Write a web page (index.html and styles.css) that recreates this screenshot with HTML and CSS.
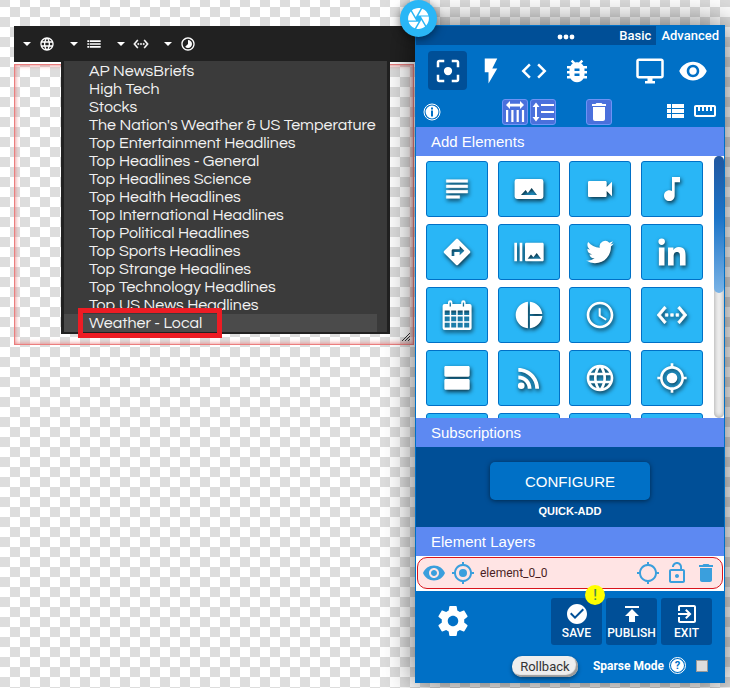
FILE: index.html
```html
<!DOCTYPE html>
<html lang="en">
<head>
<meta charset="utf-8">
<title>Element editor</title>
<link rel="stylesheet" href="styles.css">
</head>
<body>
<svg class="sprite" aria-hidden="true">
  <symbol id="globe" viewBox="0 0 24 24"><path d="M11.99 2C6.47 2 2 6.48 2 12s4.47 10 9.99 10C17.52 22 22 17.52 22 12S17.52 2 11.99 2zm6.93 6h-2.95c-.32-1.25-.78-2.45-1.38-3.56 1.84.63 3.37 1.91 4.33 3.56zM12 4.04c.83 1.2 1.48 2.53 1.91 3.96h-3.82c.43-1.43 1.08-2.76 1.91-3.96zM4.26 14C4.1 13.36 4 12.69 4 12s.1-1.36.26-2h3.38c-.08.66-.14 1.32-.14 2 0 .68.06 1.34.14 2H4.26zm.82 2h2.95c.32 1.25.78 2.45 1.38 3.56-1.84-.63-3.37-1.9-4.33-3.56zm2.95-8H5.08c.96-1.66 2.49-2.93 4.33-3.56C8.81 5.55 8.35 6.75 8.03 8zM12 19.96c-.83-1.2-1.48-2.53-1.91-3.96h3.82c-.43 1.43-1.08 2.76-1.91 3.96zM14.34 14H9.66c-.09-.66-.16-1.32-.16-2 0-.68.07-1.35.16-2h4.68c.09.65.16 1.32.16 2 0 .68-.07 1.34-.16 2zm.25 5.56c.6-1.11 1.06-2.31 1.38-3.56h2.95c-.96 1.65-2.49 2.93-4.33 3.56zM16.36 14c.08-.66.14-1.32.14-2 0-.68-.06-1.34-.14-2h3.38c.16.64.26 1.31.26 2s-.1 1.36-.26 2h-3.38z"/></symbol>
  <symbol id="list" viewBox="0 0 24 24"><path d="M2 13h3v-2H2v2zm0 4.500h3v-2.500H2v2.500zm0-8.500h3V6.500H2v2.500zm4 4h16v-2H6v2zm0 4.500h16v-2.500H6v2.500zM6 6.500v2.500h16V6.500H6z"/></symbol>
  <symbol id="ethernet" viewBox="0 0 24 24"><path stroke="currentColor" stroke-width=".5" d="M7.770 6.760L6.230 5.480.82 12l5.410 6.520 1.540-1.280L3.420 12l4.350-5.240zM7 13h2v-2H7v2zm10-2h-2v2h2v-2zm-6 2h2v-2h-2v2zm6.770-7.520l-1.540 1.280L20.580 12l-4.350 5.240 1.540 1.280L23.180 12l-5.410-6.520z"/></symbol>
  <symbol id="timelapse" viewBox="0 0 24 24"><path d="M16.240 7.760C15.070 6.590 13.540 6 12 6v6l-4.240 4.240c2.340 2.340 6.140 2.340 8.490 0 2.340-2.340 2.340-6.140-.01-8.480zM12 2C6.480 2 2 6.480 2 12s4.480 10 10 10 10-4.480 10-10S17.520 2 12 2zm0 18c-4.420 0-8-3.580-8-8s3.580-8 8-8 8 3.580 8 8-3.580 8-8 8z"/></symbol>
  <symbol id="camera" viewBox="0 0 24 24"><path d="M9.400 10.500l4.770-8.260C13.470 2.090 12.750 2 12 2c-2.400 0-4.600.85-6.320 2.250l3.660 6.350.06-.1zM21.540 9c-.92-2.920-3.150-5.260-6-6.340L11.880 9h9.660zm.26 1h-7.490l.29.5 4.760 8.250C21 16.970 22 14.610 22 12c0-.69-.07-1.350-.2-2zM8.540 12l-3.900-6.750C3.010 7.030 2 9.390 2 12c0 .69.07 1.350.2 2h7.490l-1.150-2zm-6.080 3c.92 2.920 3.150 5.260 6 6.340L12.120 15H2.460zm11.270 0l-3.900 6.760c.7.150 1.420.24 2.170.24 2.400 0 4.600-.85 6.320-2.250l-3.660-6.350-.93 1.600z"/></symbol>
  <symbol id="dots" viewBox="0 0 18 6"><circle cx="3" cy="3" r="2.400"/><circle cx="9" cy="3" r="2.400"/><circle cx="15" cy="3" r="2.400"/></symbol>
  <symbol id="focus" viewBox="0 0 24 24"><circle cx="12" cy="12" r="3.300"/><path d="M5 15H3v4c0 1.100.9 2 2 2h4v-2H5v-4zM5 5h4V3H5c-1.100 0-2 .9-2 2v4h2V5zm14-2h-4v2h4v4h2V5c0-1.100-.9-2-2-2zm0 16h-4v2h4c1.100 0 2-.9 2-2v-4h-2v4z"/></symbol>
  <symbol id="flash" viewBox="0 0 24 24"><path d="M7 2v11h3v9l7-12h-4l4-8z"/></symbol>
  <symbol id="code" viewBox="0 0 24 24"><path d="M9.400 16.600L4.800 12l4.600-4.600L8 6l-6 6 6 6 1.400-1.400zm5.200 0l4.600-4.600-4.600-4.600L16 6l6 6-6 6-1.400-1.400z"/></symbol>
  <symbol id="bug" viewBox="0 0 24 24"><path d="M20 8h-2.810c-.45-.78-1.070-1.450-1.820-1.960L17 4.410 15.590 3l-2.170 2.170C12.960 5.060 12.490 5 12 5c-.49 0-.96.06-1.410.17L8.410 3 7 4.410l1.620 1.630C7.880 6.550 7.260 7.220 6.810 8H4v2h2.090c-.05.33-.09.66-.09 1v1H4v2h2v1c0 .34.04.67.09 1H4v2h2.810c1.040 1.790 2.970 3 5.190 3s4.150-1.210 5.190-3H20v-2h-2.090c.05-.33.09-.66.09-1v-1h2v-2h-2v-1c0-.34-.04-.67-.09-1H20V8zm-6 8h-4v-2h4v2zm0-4h-4v-2h4v2z"/></symbol>
  <symbol id="monitor" viewBox="0 0 24 24"><path d="M21 2H3c-1.100 0-2 .9-2 2v12c0 1.100.9 2 2 2h7v2H8v2h8v-2h-2v-2h7c1.100 0 2-.9 2-2V4c0-1.100-.9-2-2-2zm0 14H3V4h18v12z"/></symbol>
  <symbol id="eye" viewBox="0 0 24 24"><path d="M12 4.500C7 4.500 2.730 7.610 1 12c1.730 4.390 6 7.500 11 7.500s9.270-3.110 11-7.500c-1.730-4.390-6-7.500-11-7.500zM12 17c-2.760 0-5-2.240-5-5s2.240-5 5-5 5 2.240 5 5-2.240 5-5 5zm0-8c-1.660 0-3 1.340-3 3s1.340 3 3 3 3-1.340 3-3-1.340-3-3-3z"/></symbol>
  <symbol id="info" viewBox="0 0 18 18"><circle cx="9" cy="9" r="8" fill="none" stroke="currentColor"/><circle cx="9" cy="9" r="6.400"/><path d="M8 4.500h2v2H8zM8 7.500h2v6H8z" fill="#0070c6"/></symbol>
  <symbol id="columns" viewBox="0 0 24 24"><path d="M7 6.500V9L3 5l4-4v2.800h10V1l4 4-4 4V6.500zM3 10h2.200v12H3zm5.300 0h2.200v12H8.300zm5.300 0h2.200v12h-2.200zm5.300 0h2.200v12h-2.200z"/></symbol>
  <symbol id="spacing" viewBox="0 0 24 24"><path d="M6 7h2.500L5 2.500 1.500 7H4v10H1.500L5 21.500 8.500 17H6V7zm4-3v2h13V4H10zm0 16h13v-2H10v2zm0-7h13v-2H10v2z"/></symbol>
  <symbol id="trash" viewBox="0 0 24 24"><path d="M6 19c0 1.100.9 2 2 2h8c1.100 0 2-.9 2-2V7H6v12zM19 4h-3.500l-1-1h-5l-1 1H5v2h14V4z"/></symbol>
  <symbol id="rows" viewBox="0 0 24 24"><path d="M4 14h4v-4H4v4zm0 5h4v-4H4v4zM4 9h4V5H4v4zm5 5h12v-4H9v4zm0 5h12v-4H9v4zM9 5v4h12V5H9z"/></symbol>
  <symbol id="ruler" viewBox="0 0 24 24"><path d="M21 6H3c-1.100 0-2 .9-2 2v8c0 1.100.9 2 2 2h18c1.100 0 2-.9 2-2V8c0-1.100-.9-2-2-2zm0 10H3V8h2v4h2V8h2v4h2V8h2v4h2V8h2v4h2V8h2v8z"/></symbol>
  <symbol id="subject" viewBox="0 0 24 24"><path d="M14 17H4v2h10v-2zm6-8H4v2h16V9zM4 15h16v-2H4v2zM4 5v2h16V5H4z" stroke="currentColor" stroke-width=".4"/></symbol>
  <symbol id="image" viewBox="0 0 24 24"><path fill-rule="evenodd" d="M3 4.500h18a1.800 1.800 0 0 1 1.800 1.800v11.400a1.800 1.800 0 0 1-1.800 1.800H3a1.800 1.800 0 0 1-1.800-1.800V6.300A1.800 1.800 0 0 1 3 4.500zM6 16.500h12l-4-5.300-2.900 3.800-1.600-2.300z"/></symbol>
  <symbol id="video" viewBox="0 0 24 24"><path d="M17 10.500V7c0-.55-.45-1-1-1H4c-.55 0-1 .45-1 1v10c0 .55.45 1 1 1h12c.55 0 1-.45 1-1v-3.500l4 4v-11l-4 4z"/></symbol>
  <symbol id="note" viewBox="0 0 24 24"><path d="M12 3v10.550c-.59-.34-1.270-.55-2-.55-2.210 0-4 1.790-4 4s1.790 4 4 4 4-1.790 4-4V7h4V3h-6z"/></symbol>
  <symbol id="directions" viewBox="0 0 24 24"><path d="M21.710 11.290l-9-9c-.39-.39-1.020-.39-1.410 0l-9 9c-.39.39-.39 1.020 0 1.410l9 9c.39.39 1.020.39 1.410 0l9-9c.39-.38.39-1.010 0-1.410zM14 14.500V12h-4v3H8v-4c0-.55.45-1 1-1h5V7.500l3.500 3.500-3.500 3.500z"/></symbol>
  <symbol id="burst" viewBox="0 0 24 24"><path d="M1 5h2v14H1zm4 0h2v14H5zm17 0H10c-.55 0-1 .45-1 1v12c0 .55.45 1 1 1h12c.55 0 1-.45 1-1V6c0-.55-.45-1-1-1zM11 17l2.500-3.150L15.290 16l2.500-3.220L21 17H11z"/></symbol>
  <symbol id="twitter" viewBox="-2 -2 28 28"><path d="M23.953 4.570a10 10 0 01-2.825.775 4.958 4.958 0 002.163-2.723c-.951.555-2.005.959-3.127 1.184a4.920 4.920 0 00-8.384 4.482C7.690 8.095 4.067 6.130 1.640 3.162a4.822 4.822 0 00-.666 2.475c0 1.710.87 3.213 2.188 4.096a4.904 4.904 0 01-2.228-.616v.06a4.923 4.923 0 003.946 4.827 4.996 4.996 0 01-2.212.085 4.936 4.936 0 004.604 3.417 9.867 9.867 0 01-6.102 2.105c-.39 0-.779-.023-1.170-.067a13.995 13.995 0 007.557 2.209c9.053 0 13.998-7.496 13.998-13.985 0-.21 0-.42-.015-.63A9.935 9.935 0 0024 4.590z"/></symbol>
  <symbol id="linkedin" viewBox="-40 -40 528 528"><path d="M100.280 448H7.400V148.900h92.880zM53.790 108.100C24.090 108.100 0 83.500 0 53.800a53.790 53.790 0 0 1 107.580 0c0 29.700-24.100 54.300-53.790 54.300zM447.900 448h-92.680V302.400c0-34.700-.7-79.200-48.290-79.200-48.290 0-55.690 37.700-55.690 76.700V448h-92.780V148.900h89.080v40.800h1.300c12.400-23.500 42.690-48.300 87.880-48.300 94 0 111.280 61.900 111.280 142.300V448z"/></symbol>
  <symbol id="calendar" viewBox="0 0 32 32"><path fill-rule="evenodd" d="M3.500 5H7V3.500a2.200 2.200 0 0 1 4.400 0V5h8.800V3.500a2.200 2.200 0 0 1 4.400 0V5h4a2 2 0 0 1 2 2v22a2 2 0 0 1-2 2h-25a2 2 0 0 1-2-2V7a2 2 0 0 1 2-2zM8.600 3.500v4h1.300v-4zm13.200 0v4h1.300v-4zM3.700 11.500v4.400h5v-4.400zm6.500 0v4.400h5v-4.400zm6.500 0v4.400h5v-4.400zm6.500 0v4.400h5v-4.400zM3.700 17.400v4.800h5v-4.800zm6.500 0v4.800h5v-4.800zm6.500 0v4.800h5v-4.800zm6.500 0v4.800h5v-4.800zM3.700 23.700v4.800h5v-4.800zm6.500 0v4.800h5v-4.800zm6.500 0v4.800h5v-4.800zm6.500 0v4.800h5v-4.800z"/></symbol>
  <symbol id="pie" viewBox="0 0 24 24"><path d="M11.200 2v20C6 21.500 2 17.200 2 12s4-9.500 9.200-10zm1.500 0v9.200H22c-.47-4.900-4.400-8.700-9.300-9.200zm0 10.800V22c4.900-.5 8.800-4.300 9.300-9.200z"/></symbol>
  <symbol id="clock" viewBox="0 0 24 24"><path d="M11.990 2C6.470 2 2 6.480 2 12s4.470 10 9.990 10C17.520 22 22 17.520 22 12S17.520 2 11.990 2zM12 20c-4.420 0-8-3.580-8-8s3.580-8 8-8 8 3.580 8 8-3.580 8-8 8zm.5-13H11v6l5.250 3.150.75-1.230-4.500-2.670z"/></symbol>
  <symbol id="agenda" viewBox="0 0 24 24"><path d="M20.500 12.800h-17c-.55 0-1 .45-1 1v6c0 .55.45 1 1 1h17c.55 0 1-.45 1-1v-6c0-.55-.45-1-1-1zm0-9.800h-17c-.55 0-1 .45-1 1v6c0 .55.45 1 1 1h17c.55 0 1-.45 1-1V4c0-.55-.45-1-1-1z"/></symbol>
  <symbol id="rss" viewBox="0 0 24 24"><circle cx="6.180" cy="17.820" r="2.500"/><path d="M4 4.440v2.830c7.030 0 12.730 5.700 12.730 12.730h2.830c0-8.590-6.970-15.560-15.560-15.560zm0 5.660v2.830c3.900 0 7.070 3.170 7.070 7.070h2.830c0-5.470-4.430-9.900-9.900-9.900z"/></symbol>
  <symbol id="ring" viewBox="0 0 24 24"><path d="M20.940 11c-.46-4.170-3.770-7.480-7.940-7.940V1h-2v2.060C6.830 3.520 3.520 6.830 3.060 11H1v2h2.060c.46 4.170 3.770 7.480 7.940 7.940V23h2v-2.060c4.170-.46 7.480-3.770 7.940-7.940H23v-2h-2.060zM12 19c-3.870 0-7-3.130-7-7s3.130-7 7-7 7 3.130 7 7-3.130 7-7 7z"/></symbol>
  <symbol id="target" viewBox="0 0 24 24"><circle cx="12" cy="12" r="4"/><path d="M20.940 11c-.46-4.170-3.770-7.480-7.940-7.940V1h-2v2.060C6.830 3.520 3.520 6.830 3.060 11H1v2h2.060c.46 4.170 3.770 7.480 7.940 7.940V23h2v-2.060c4.170-.46 7.480-3.770 7.940-7.940H23v-2h-2.060zM12 19c-3.870 0-7-3.130-7-7s3.130-7 7-7 7 3.130 7 7-3.130 7-7 7z"/></symbol>
  <symbol id="unlock" viewBox="0 0 24 24"><path d="M12 17c1.100 0 2-.9 2-2s-.9-2-2-2-2 .9-2 2 .9 2 2 2zm6-9h-1V6c0-2.760-2.240-5-5-5S7 3.240 7 6h1.900c0-1.710 1.390-3.100 3.100-3.100 1.710 0 3.100 1.390 3.100 3.100v2H6c-1.100 0-2 .9-2 2v10c0 1.100.9 2 2 2h12c1.100 0 2-.9 2-2V10c0-1.100-.9-2-2-2zm0 12H6V10h12v10z"/></symbol>
  <symbol id="gear" viewBox="0 0 24 24"><path d="M19.430 12.980c.04-.32.07-.64.07-.98s-.03-.66-.07-.98l2.110-1.650c.19-.15.24-.42.12-.64l-2-3.460c-.12-.22-.39-.3-.61-.22l-2.490 1c-.52-.4-1.080-.73-1.690-.98l-.38-2.650C14.460 2.180 14.250 2 14 2h-4c-.25 0-.46.18-.49.42l-.38 2.650c-.61.25-1.170.59-1.690.98l-2.490-1c-.23-.09-.49 0-.61.22l-2 3.460c-.13.22-.07.49.12.64l2.110 1.650c-.04.32-.07.65-.07.98s.03.66.07.98l-2.110 1.650c-.19.15-.24.42-.12.64l2 3.460c.12.22.39.3.61.22l2.490-1c.52.4 1.080.73 1.690.98l.38 2.650c.03.24.24.42.49.42h4c.25 0 .46-.18.49-.42l.38-2.650c.61-.25 1.170-.59 1.690-.98l2.490 1c.23.09.49 0 .61-.22l2-3.460c.12-.22.07-.49-.12-.64l-2.110-1.650zM12 15.500c-1.930 0-3.500-1.570-3.500-3.500s1.570-3.500 3.500-3.500 3.500 1.570 3.500 3.500-1.570 3.500-3.500 3.500z"/></symbol>
  <symbol id="check" viewBox="0 0 24 24"><path d="M12 2C6.480 2 2 6.480 2 12s4.480 10 10 10 10-4.480 10-10S17.520 2 12 2zm-2 15l-5-5 1.410-1.410L10 14.170l7.590-7.590L19 8l-9 9z"/></symbol>
  <symbol id="publish" viewBox="0 0 24 24"><path d="M5 4v2h14V4H5zm0 10h4v6h6v-6h4l-7-7-7 7z"/></symbol>
  <symbol id="exit" viewBox="0 0 24 24"><path d="M10.090 15.590L11.500 17l5-5-5-5-1.410 1.410L12.670 11H3v2h9.670l-2.580 2.590zM19 3H5c-1.110 0-2 .9-2 2v4h2V5h14v14H5v-4H3v4c0 1.100.89 2 2 2h14c1.100 0 2-.9 2-2V5c0-1.100-.9-2-2-2z"/></symbol>
</svg>

<main class="canvas">
  <div class="toolbar">
    <button class="tool" aria-label="Links"><span class="caret"></span><svg><use href="#globe"/></svg></button>
    <button class="tool" aria-label="Feeds"><span class="caret"></span><svg><use href="#list"/></svg></button>
    <button class="tool" aria-label="Embed"><span class="caret"></span><svg><use href="#ethernet"/></svg></button>
    <button class="tool" aria-label="Timing"><span class="caret"></span><svg><use href="#timelapse"/></svg></button>
    <ul class="menu">
      <li>AP NewsBriefs</li>
      <li>High Tech</li>
      <li>Stocks</li>
      <li>The Nation's Weather &amp; US Temperature</li>
      <li>Top Entertainment Headlines</li>
      <li>Top Headlines - General</li>
      <li>Top Headlines Science</li>
      <li>Top Health Headlines</li>
      <li>Top International Headlines</li>
      <li>Top Political Headlines</li>
      <li>Top Sports Headlines</li>
      <li>Top Strange Headlines</li>
      <li>Top Technology Headlines</li>
      <li>Top US News Headlines</li>
      <li class="current">Weather - Local<span class="marker"></span></li>
    </ul>
  </div>
  <div class="frame">
    <svg class="grip" viewBox="0 0 8 8"><path d="M0 8L8 0M3 8l5-5M6 8l2-2"/></svg>
  </div>
</main>

<aside class="panel">
  <button class="shutter" aria-label="Capture"><svg><use href="#camera"/></svg></button>
  <header class="tabs">
    <svg class="handle"><use href="#dots"/></svg>
    <button class="tab">Basic</button>
    <button class="tab active">Advanced</button>
  </header>
  <div class="modes">
    <button class="mode active" aria-label="Focus"><svg><use href="#focus"/></svg></button>
    <button class="mode" aria-label="Actions"><svg><use href="#flash"/></svg></button>
    <button class="mode" aria-label="Code"><svg><use href="#code"/></svg></button>
    <button class="mode" aria-label="Debug"><svg><use href="#bug"/></svg></button>
    <button class="mode push" aria-label="Display"><svg><use href="#monitor"/></svg></button>
    <button class="mode" aria-label="Preview"><svg><use href="#eye"/></svg></button>
  </div>
  <div class="options">
    <button class="plain" aria-label="Info"><svg class="badge-icon"><use href="#info"/></svg></button>
    <div class="chips">
      <button class="chip" aria-label="Column spacing"><svg><use href="#columns"/></svg></button>
      <button class="chip" aria-label="Row spacing"><svg><use href="#spacing"/></svg></button>
      <button class="chip apart" aria-label="Delete"><svg><use href="#trash"/></svg></button>
    </div>
    <div class="views">
      <button class="plain" aria-label="List view"><svg><use href="#rows"/></svg></button>
      <button class="plain" aria-label="Ruler"><svg><use href="#ruler"/></svg></button>
    </div>
  </div>

  <h2>Add Elements</h2>
  <div class="library">
    <div class="tiles">
      <button class="tile" aria-label="Text"><svg><use href="#subject"/></svg></button>
      <button class="tile" aria-label="Image"><svg><use href="#image"/></svg></button>
      <button class="tile" aria-label="Video"><svg><use href="#video"/></svg></button>
      <button class="tile" aria-label="Audio"><svg><use href="#note"/></svg></button>
      <button class="tile" aria-label="Directions"><svg><use href="#directions"/></svg></button>
      <button class="tile" aria-label="Slideshow"><svg><use href="#burst"/></svg></button>
      <button class="tile" aria-label="Twitter"><svg><use href="#twitter"/></svg></button>
      <button class="tile" aria-label="LinkedIn"><svg><use href="#linkedin"/></svg></button>
      <button class="tile" aria-label="Calendar"><svg><use href="#calendar"/></svg></button>
      <button class="tile" aria-label="Chart"><svg><use href="#pie"/></svg></button>
      <button class="tile" aria-label="Clock"><svg><use href="#clock"/></svg></button>
      <button class="tile" aria-label="Embed"><svg><use href="#ethernet"/></svg></button>
      <button class="tile" aria-label="Agenda"><svg><use href="#agenda"/></svg></button>
      <button class="tile" aria-label="RSS"><svg><use href="#rss"/></svg></button>
      <button class="tile" aria-label="Web"><svg><use href="#globe"/></svg></button>
      <button class="tile" aria-label="Location"><svg><use href="#target"/></svg></button>
      <button class="tile" aria-label="More"></button>
      <button class="tile" aria-label="More"></button>
      <button class="tile" aria-label="More"></button>
      <button class="tile" aria-label="More"></button>
    </div>
    <div class="scroll"><div class="thumb"></div></div>
  </div>

  <h2>Subscriptions</h2>
  <div class="subscriptions">
    <button class="configure">CONFIGURE</button>
    <span class="quick">QUICK-ADD</span>
  </div>

  <h2>Element Layers</h2>
  <div class="layers">
    <div class="layer">
      <button class="plain" aria-label="Show"><svg><use href="#eye"/></svg></button>
      <button class="plain" aria-label="Select"><svg><use href="#target"/></svg></button>
      <span class="name">element_0_0</span>
      <button class="plain" aria-label="Locate"><svg><use href="#ring"/></svg></button>
      <button class="plain" aria-label="Lock"><svg><use href="#unlock"/></svg></button>
      <button class="plain" aria-label="Delete layer"><svg><use href="#trash"/></svg></button>
    </div>
  </div>

  <footer>
    <div class="actions">
      <button class="plain settings" aria-label="Settings"><svg><use href="#gear"/></svg></button>
      <button class="action"><svg><use href="#check"/></svg>SAVE<span class="alert">!</span></button>
      <button class="action"><svg><use href="#publish"/></svg>PUBLISH</button>
      <button class="action"><svg><use href="#exit"/></svg>EXIT</button>
    </div>
    <div class="extras">
      <button class="rollback">Rollback</button>
      <label for="sparse">Sparse Mode</label>
      <button class="help" aria-label="Help"><span>?</span></button>
      <input type="checkbox" id="sparse">
    </div>
  </footer>
</aside>
</body>
</html>
```
FILE: styles.css
```css
* { box-sizing: border-box; }

body {
  margin: 0;
  min-height: 100vh;
  display: flex;
  align-items: flex-start;
  font-family: "Liberation Sans", Arial, sans-serif;
  color: #fff;
  background: repeating-conic-gradient(#fff 0 25%, #ddd 0 50%) 0 -3px / 20px 20px;
  overflow: hidden;
}

button {
  margin: 0;
  padding: 0;
  border: 0;
  background: none;
  color: inherit;
  font: inherit;
}

svg { display: block; fill: currentColor; }
.sprite { position: absolute; width: 0; height: 0; }

/* Canvas */
.canvas { flex: 1; min-width: 0; padding: 26px 0 0 14px; }

.toolbar {
  position: relative;
  display: flex;
  align-items: center;
  gap: 15px;
  height: 36px;
  padding-left: 9px;
  background: #212121;
  border-bottom: 1px solid #212121;
}
.tool { display: flex; align-items: center; gap: 8px; }
.tool svg { width: 16px; height: 16px; }
.caret {
  border: 4px solid transparent;
  border-top-color: #fff;
  border-bottom: 0;
}

.menu {
  position: absolute;
  top: 35px;
  left: 47px;
  width: 329px;
  margin: 0;
  padding: 1px 10px 0 0;
  list-style: none;
  background: #3b3b3b;
  border: 3px solid #212121;
  border-top: 0;
  border-bottom-width: 2px;
  font: 16px/18px "Questrial", "Century Gothic", Lato, sans-serif;
  color: #f2f2f2;
  white-space: nowrap;
}
.menu li { position: relative; padding-left: 25px; height: 18px; }
.menu .current { background: #4b4b4b; }
.marker {
  position: absolute;
  left: 14px;
  top: -6px;
  width: 144px;
  height: 30px;
  border: 5px solid #ed1c24;
}

.frame {
  display: flex;
  align-items: flex-end;
  justify-content: flex-end;
  height: 283px;
  margin-right: 1px;
  padding: 4px;
  border-top: 2px solid #fff;
  box-shadow: inset 0 0 5px 1px #e87878, inset 0 0 0 1px #e88;
}
.grip { width: 8px; height: 8px; fill: none; stroke: #333; }

/* Side panel */
.panel {
  position: relative;
  width: 310px;
  margin: 25px 5px 6px 0;
  border: 1px solid #0070c6;
  background: #0070c6;
  box-shadow: 0 0 30px rgba(0, 0, 0, 0.6);
}

.shutter {
  position: absolute;
  top: -26px;
  left: -16px;
  display: grid;
  place-items: center;
  width: 37px;
  height: 37px;
  border-radius: 50%;
  background: #29b6f6;
  box-shadow: 0 2px 10px rgba(0, 0, 0, 0.5);
}
.shutter svg { width: 25px; height: 25px; }

.tabs {
  display: flex;
  align-items: stretch;
  height: 19px;
  background: #004f97;
  font: 500 13px/19px Roboto, sans-serif;
}
.handle { width: 18px; height: 6px; margin: 8px auto 0 141px; }
.tab { padding: 0 5px; }
.tab.active { background: #0070c6; }

.modes { display: flex; gap: 4px; padding: 6px 12px 9px; }
.mode {
  display: grid;
  place-items: center;
  width: 39px;
  height: 39px;
  border-radius: 4px;
}
.mode.active { background: #004f97; }
.mode.push { margin-left: auto; }
.mode svg { width: 30px; height: 30px; }

.options {
  display: grid;
  grid-template-columns: 79px 1fr auto;
  align-items: center;
  padding: 0 7px 2px;
}
.chips { display: flex; gap: 2px; }
.chip {
  display: grid;
  place-items: center;
  width: 26px;
  height: 26px;
  border: 1px solid #6e93f5;
  border-radius: 3px;
  background: #4a70dc;
}
.chip.apart { margin-left: 28px; }
.chip svg { width: 24px; height: 24px; }
.badge-icon { width: 18px; height: 18px; }
.views { display: flex; gap: 6px; align-self: start; }
.views svg { width: 24px; height: 24px; }

h2 {
  margin: 0;
  padding-left: 15px;
  background: #5d89f2;
  font-size: 15px;
  font-weight: 400;
  line-height: 29px;
}

.library { display: flex; height: 262px; background: #fff; overflow: hidden; }
.tiles {
  flex: 1;
  display: grid;
  grid-template-columns: repeat(4, 62px);
  grid-auto-rows: 56px;
  justify-content: space-between;
  align-content: start;
  row-gap: 7px;
  padding: 5px 11px 0 10px;
}
.tile {
  display: grid;
  place-items: center;
  border: 1px solid #0070c6;
  border-radius: 3px;
  background: #29b6f6;
}
.tile svg {
  width: 32px;
  height: 32px;
  overflow: visible;
  filter: drop-shadow(1px 2px 2px rgba(0, 0, 0, 0.75));
}
.scroll {
  width: 10px;
  border-radius: 6px;
  background: #eee;
  box-shadow: inset 0 0 5px rgba(0, 0, 0, 0.35);
}
.thumb {
  height: 137px;
  border-radius: 6px;
  background: linear-gradient(#22579f, #1c74c8 45%, #7ab3e6);
}

.subscriptions {
  display: flex;
  flex-direction: column;
  align-items: center;
  height: 80px;
  padding-top: 15px;
  background: #004f97;
}
.configure {
  width: 160px;
  height: 38px;
  border-radius: 5px;
  background: #0070c6;
  box-shadow: 0 1px 5px rgba(0, 0, 0, 0.5);
  font-size: 15px;
}
.quick { margin-top: 5px; font-size: 11px; font-weight: 700; line-height: 13px; }

.layers { padding: 1px 1px 2px; background: #fff; }
.layer {
  display: flex;
  align-items: center;
  gap: 5px;
  height: 32px;
  padding: 0 4px;
  border: 1px solid #d8141c;
  border-radius: 10px;
  background: #ffe4e4;
  color: #3a9fdd;
}
.layer svg { width: 24px; height: 24px; }
.name { flex: 1; color: #4a1f24; font: 12px/18px Roboto, sans-serif; }

footer { padding: 7px 12px 5px; font-family: Roboto, sans-serif; }
.actions { display: flex; gap: 4px; align-items: flex-start; }
.settings { margin: 5px auto 0 7px; }
.settings svg { width: 36px; height: 36px; }
.action {
  position: relative;
  display: flex;
  flex-direction: column;
  align-items: center;
  width: 51px;
  height: 47px;
  padding-top: 4px;
  border-radius: 3px;
  background: #004f97;
  font-size: 12px;
  font-weight: 500;
  line-height: 14px;
}
.action svg { width: 24px; height: 24px; }
.alert {
  position: absolute;
  top: -13px;
  right: -3px;
  width: 20px;
  height: 20px;
  border-radius: 50%;
  background: #ff0;
  color: #4a8a50;
  font-size: 14px;
  line-height: 20px;
}

.extras {
  display: flex;
  align-items: center;
  justify-content: flex-end;
  gap: 5px;
  padding: 9px 4px 0 0;
}
.rollback {
  width: 66px;
  height: 21px;
  margin: 2px 10px 0 0;
  border-radius: 10px;
  background: #eee;
  box-shadow: inset -2px -2px 1px #999, 0 2px 4px rgba(0, 0, 0, 0.4);
  color: #333;
  font-size: 13px;
}
.extras label { font-size: 12px; font-weight: 700; }
.help {
  width: 17px;
  height: 17px;
  padding: 1px;
  border: 1px solid #fff;
  border-radius: 50%;
}
.help span {
  display: block;
  border-radius: 50%;
  background: #fff;
  color: #0070c6;
  font-size: 11px;
  font-weight: 700;
  line-height: 13px;
}
.extras input {
  appearance: none;
  width: 12px;
  height: 12px;
  margin: 0 0 0 5px;
  border: 1px solid #999;
  background: #ddd;
}
```
